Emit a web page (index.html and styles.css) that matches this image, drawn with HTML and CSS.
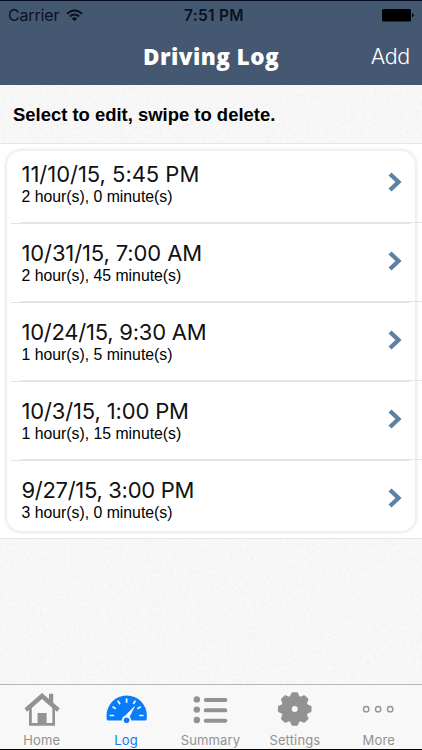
FILE: index.html
```html
<!DOCTYPE html>
<html lang="en">
<head>
<meta charset="utf-8">
<title>Driving Log</title>
<link rel="stylesheet" href="styles.css">
</head>
<body>
<div class="app">
  <svg class="texture" width="422" height="750" aria-hidden="true">
    <filter id="linen" x="0" y="0" width="100%" height="100%">
      <feTurbulence type="fractalNoise" baseFrequency="0.3 0.3" numOctaves="3" seed="4"/>
      <feColorMatrix values="0 0 0 0 0  0 0 0 0 0  0 0 0 0 0  .05 0 0 0 -.02"/>
    </filter>
    <rect width="422" height="750" filter="url(#linen)"/>
  </svg>
  <header class="header">
    <div class="status">
      <div class="carrier"><span>Carrier</span>
        <svg width="17" height="13" viewBox="0 0 17 13"><g fill="none" stroke="#0b111b" stroke-width="2"><path d="M1 4.7Q8.5-2 16 4.7"/><path d="M3.8 7.6Q8.5 3.3 13.2 7.6"/></g><path d="M5.7 9.4Q8.5 7 11.3 9.4L8.5 12.3Z" fill="#0b111b"/></svg>
      </div>
      <div class="time">7:51 PM</div>
      <svg class="battery" width="32" height="13" viewBox="0 0 32 13"><rect width="29" height="12.5" rx="1.6"/><path d="M30 4.2q1.7.6 1.7 2t-1.7 2Z"/></svg>
    </div>
    <div class="nav"><h1>Driving Log</h1><a class="add">Add</a></div>
  </header>
  <p class="hint">Select to edit, swipe to delete.</p>
  <main class="list">
    <ul class="card">
      <li class="row"><div><div class="date d1">11/10/15, 5:45 PM</div><div class="dur">2 hour(s), 0 minute(s)</div></div><svg class="chev" width="14" height="20" viewBox="0 0 14 20"><path d="M2 2L10.5 10L2 18"/></svg></li>
      <li class="row"><div><div class="date d2">10/31/15, 7:00 AM</div><div class="dur">2 hour(s), 45 minute(s)</div></div><svg class="chev" width="14" height="20" viewBox="0 0 14 20"><path d="M2 2L10.5 10L2 18"/></svg></li>
      <li class="row"><div><div class="date d3">10/24/15, 9:30 AM</div><div class="dur">1 hour(s), 5 minute(s)</div></div><svg class="chev" width="14" height="20" viewBox="0 0 14 20"><path d="M2 2L10.5 10L2 18"/></svg></li>
      <li class="row"><div><div class="date d4">10/3/15, 1:00 PM</div><div class="dur">1 hour(s), 15 minute(s)</div></div><svg class="chev" width="14" height="20" viewBox="0 0 14 20"><path d="M2 2L10.5 10L2 18"/></svg></li>
      <li class="row"><div><div class="date d5">9/27/15, 3:00 PM</div><div class="dur">3 hour(s), 0 minute(s)</div></div><svg class="chev" width="14" height="20" viewBox="0 0 14 20"><path d="M2 2L10.5 10L2 18"/></svg></li>
    </ul>
  </main>
  <nav class="tabs">
    <a class="tab home"><svg width="42" height="42" viewBox="0 -.7 42 42"><path fill="currentColor" d="M21 5.2 3.5 20.6 6 24 8 22.4V38H34V22.4L36.2 24 38.6 20.6 32.2 15V6H28V11.3Z"/><path fill="#f8f8f8" d="M21 11.2 10.8 20.2V35.4H16.6V25.4H25.6V35.4H31.4V20.2Z"/></svg><span>Home</span></a>
    <a class="tab log"><svg width="42" height="42" viewBox="0.4 0 42 42"><path fill="currentColor" d="M3 33.6A2 2 0 0 1 1 31.7V28.5A20.1 20 0 0 1 41.2 28.5V31.7A2 2 0 0 1 39.2 33.6H25.8A5 5 0 0 0 23.8 29.8L29.4 19 19.5 28.8A5 5 0 0 0 16.2 33.6Z"/><circle cx="21" cy="33.2" r="2.8" fill="currentColor"/><g stroke="#f8f8f8" stroke-width="1.7"><path d="M4 28.5H8.5M33.5 28.5H38M6.8 19.6 10.2 21.8M12.2 13.6 14.4 17.3M21 11.5V15.8M29.8 13.6 27.8 17M35.2 19.6 31.8 21.8"/></g><path d="M29.4 19 23.3 31 19.3 29Z" fill="#f8f8f8"/></svg><span>Log</span></a>
    <a class="tab summary"><svg width="42" height="42" viewBox="0.5 0 42 42"><g fill="currentColor"><circle cx="7.3" cy="12.4" r="3.2"/><circle cx="7.3" cy="22.6" r="3.2"/><circle cx="7.3" cy="33" r="3.2"/><rect x="14.3" y="11" width="23.5" height="4" rx="1.9"/><rect x="14.3" y="21.3" width="23.5" height="4" rx="1.9"/><rect x="14.3" y="31.7" width="23.5" height="4" rx="1.9"/></g></svg><span>Summary</span></a>
    <a class="tab settings"><svg width="42" height="42" viewBox="0.3 0 42 42"><g fill="currentColor"><circle cx="21" cy="22" r="13.6"/><g id="teeth"><path id="tooth" d="M15.5 11.5 17.7 6Q18 5.2 19 5.2H23Q24 5.2 24.3 6L26.5 11.5Z"/><use href="#tooth" transform="rotate(45 21 22)"/><use href="#tooth" transform="rotate(90 21 22)"/><use href="#tooth" transform="rotate(135 21 22)"/></g><use href="#teeth" transform="rotate(180 21 22)"/></g><circle cx="21" cy="22" r="3" fill="#f8f8f8"/></svg><span>Settings</span></a>
    <a class="tab more"><svg width="42" height="42" viewBox="1.8 0 42 42"><g fill="none" stroke="currentColor" stroke-width="1.3"><circle cx="9" cy="22.2" r="2.7"/><circle cx="21" cy="22.2" r="2.7"/><circle cx="33" cy="22.2" r="2.7"/></g></svg><span>More</span></a>
  </nav>
</div>
</body>
</html>
```
FILE: styles.css
```css
* { box-sizing: border-box; }
body { margin: 0; font-family: Inter, sans-serif; color: #000; }
.app { position: relative; width: 422px; height: 750px; overflow: hidden; background: #f8f8f8; display: flex; flex-direction: column; isolation: isolate; }
.texture { position: absolute; inset: 0; z-index: -1; }
.header { height: 85px; background: #445872; border-top: 1px solid #070d20; flex: none; }
.status { height: 28px; display: grid; grid-template-columns: 1fr auto 1fr; align-items: center; padding: 0 8px; color: #0b111b; font-size: 16px; }
.carrier { display: flex; align-items: center; gap: 7px; letter-spacing: -0.15px; }
.time { font-weight: 600; font-size: 15.5px; letter-spacing: 0.3px; margin-left: 6px; }
.battery { justify-self: end; fill: #000; }
.nav { height: 56px; position: relative; display: flex; justify-content: center; align-items: center; color: #fff; }
h1 { margin: 0; font: 800 22.5px/30px "Open Sans", sans-serif; letter-spacing: 0.45px; }
.add { position: absolute; right: 12px; top: 13px; font: 300 21.5px/29px Inter, sans-serif; letter-spacing: -0.3px; }
.hint { margin: 0; height: 58px; padding-left: 13px; font: bold 18.45px/59px "Liberation Sans", sans-serif; flex: none; white-space: nowrap; }
.list { height: 396px; background: #fff; border-top: 1px solid #e6e6e9; border-bottom: 1px solid #e4e4e7; padding: 6px 6px; flex: none; }
.card { list-style: none; margin: 0; padding: 0; height: 382px; border: 1px solid #eee; border-radius: 15px; box-shadow: 0 0 3px 1px #e8e8e8; }
.row { position: relative; height: 79px; padding: 16px 13px 0 14.5px; display: flex; justify-content: space-between; }
.row:first-child { height: 72px; padding-top: 9px; }
.row:not(:first-child)::before { content: ""; position: absolute; left: 4px; right: 5px; top: 0; height: 1px; background: #e3e3e6; }
.row:not(:last-child)::after { content: ""; position: absolute; left: 14px; right: -9px; bottom: 0; height: 1px; background: #e5e5e8; }
.date { font-size: 22px; line-height: 28px; white-space: nowrap; color: #111; }
.d1 { letter-spacing: -0.03px; }
.d2 { letter-spacing: -0.12px; }
.d3 { letter-spacing: -0.24px; }
.d4 { letter-spacing: -0.15px; }
.d5 { letter-spacing: -0.31px; }
.dur { font: 15.8px/18px "Liberation Sans", sans-serif; white-space: nowrap; }
.chev { margin-top: 12px; fill: none; stroke: #5c81a2; stroke-width: 4.3; }
.tabs { position: absolute; left: 0; right: 0; bottom: 0; height: 66px; background: #f8f8f8; border-top: 1px solid #b6b6b8; border-bottom: 1px solid #000; display: grid; grid-template-columns: repeat(5, 1fr); }
.tab { display: flex; flex-direction: column; align-items: center; color: #929292; font-size: 13px; line-height: 16px; padding-top: 2px; }
.tab svg { flex: none; display: block; }
.tab span { margin-top: 3px; margin-right: 1px; letter-spacing: 0.15px; }
.more span { margin-right: 2px; }
.log { color: #087cfb; }
```
